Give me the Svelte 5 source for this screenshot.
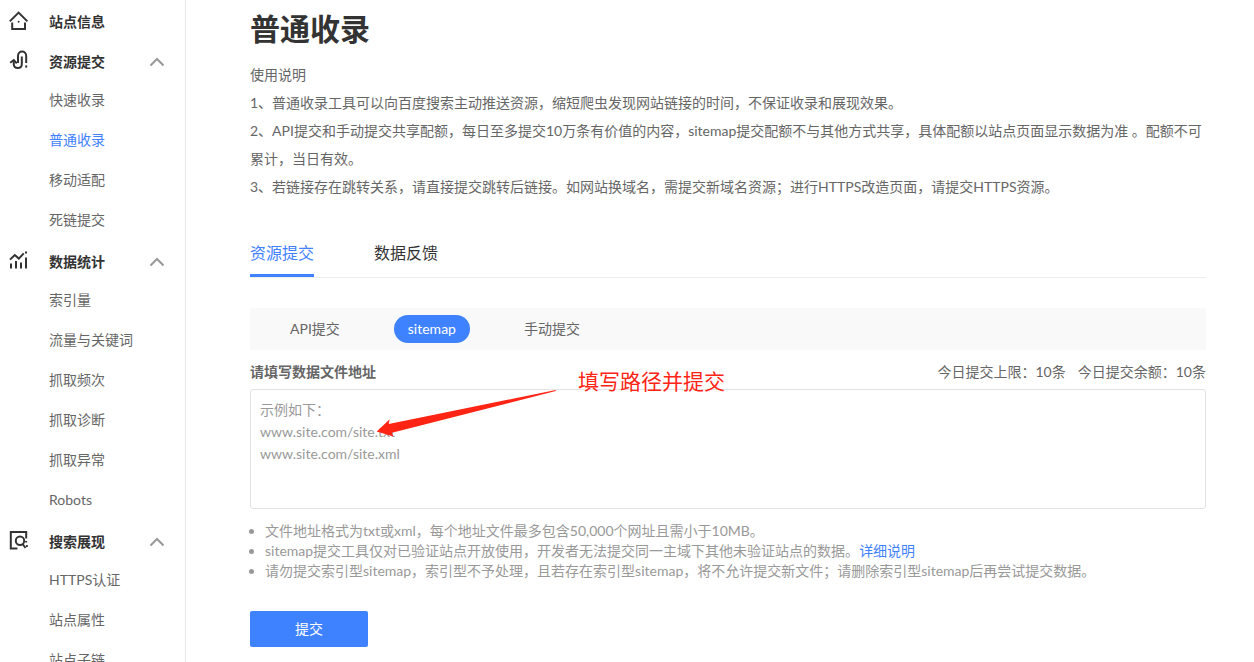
<script lang="ts">
  type Group = { name: string; icon: string; items: string[] };

  const groups: Group[] = [
    { name: '站点信息', icon: 'home', items: [] },
    { name: '资源提交', icon: 'link', items: ['快速收录', '普通收录', '移动适配', '死链提交'] },
    {
      name: '数据统计',
      icon: 'chart',
      items: ['索引量', '流量与关键词', '抓取频次', '抓取诊断', '抓取异常', 'Robots']
    },
    { name: '搜索展现', icon: 'search', items: ['HTTPS认证', '站点属性', '站点子链'] }
  ];

  const tabs = ['资源提交', '数据反馈'];
  const methods = ['API提交', 'sitemap', '手动提交'];

  let activeItem = $state('普通收录');
  let activeTab = $state('资源提交');
  let activeMethod = $state('sitemap');
  let closed = $state<string[]>([]);
  let urls = $state('');

  const placeholder = '示例如下：\nwww.site.com/site.txt\nwww.site.com/site.xml';

  function toggle(name: string) {
    closed = closed.includes(name) ? closed.filter((n) => n !== name) : [...closed, name];
  }
</script>

{#snippet groupIcon(icon: string)}
  <svg class="icon" viewBox="0 0 20 20" aria-hidden="true">
    {#if icon === 'home'}
      <path d="M.8 11.4 9.6 2.6l8.8 8.8" />
      <path d="M3.2 12.6V19H16v-6.4" />
      <circle class="dot" cx="9.6" cy="11.8" r="1" />
    {:else if icon === 'link'}
      <path d="M1.2 12.8 4.8 10 7.8 13.4" />
      <path d="M4.8 10.4v3.8c0 5 8 5 8 0V6.4" />
      <path d="M9 13V6c0-6 8.2-6 8.2 0v7" />
      <path d="M17.2 15.4v2.2" />
    {:else if icon === 'chart'}
      <path d="M1 9.6 5.8 5l4 3.6 5-5.2" />
      <path d="M2 13.4v5M7 11v7.4M12 12.4v6M17 7.4v11M17 1.4v2" />
    {:else}
      <path d="M8.4 18.6H1.8V2h15.4v6.4M1.8 2v16.6" />
      <circle cx="11" cy="10.8" r="4.2" />
      <path d="m13.6 14 3 4M17.2 11v1.6M17 16h1.8" />
    {/if}
  </svg>
{/snippet}

<div class="page">
  <nav class="sidebar">
    {#each groups as group}
      <button class="group" onclick={() => toggle(group.name)}>
        {@render groupIcon(group.icon)}
        <span class="group-name">{group.name}</span>
        {#if group.items.length}
          <svg class="chevron" viewBox="0 0 16 12" aria-hidden="true">
            <path d="M1.5 10.5 8 4l6.5 6.5" />
          </svg>
        {/if}
      </button>
      {#if !closed.includes(group.name)}
        {#each group.items as item}
          <a
            class="item"
            class:active={item === activeItem}
            href="#{item}"
            onclick={() => (activeItem = item)}>{item}</a
          >
        {/each}
      {/if}
    {/each}
  </nav>

  <main class="content">
    <h1>普通收录</h1>
    <div class="intro">
      <p>使用说明</p>
      <p>1、普通收录工具可以向百度搜索主动推送资源，缩短爬虫发现网站链接的时间，不保证收录和展现效果。</p>
      <p>
        2、API提交和手动提交共享配额，每日至多提交10万条有价值的内容，sitemap提交配额不与其他方式共享，具体配额以站点页面显示数据为准 。配额不可累计，当日有效。
      </p>
      <p>
        3、若链接存在跳转关系，请直接提交跳转后链接。如网站换域名，需提交新域名资源；进行HTTPS改造页面，请提交HTTPS资源。
      </p>
    </div>

    <div class="tabs">
      {#each tabs as tab}
        <button class="tab" class:active={tab === activeTab} onclick={() => (activeTab = tab)}>{tab}</button>
      {/each}
    </div>

    <div class="methods">
      {#each methods as method}
        <button class="method" class:active={method === activeMethod} onclick={() => (activeMethod = method)}
          >{method}</button
        >
      {/each}
    </div>

    <form onsubmit={(e) => e.preventDefault()}>
      <div class="form-head">
        <label for="urls">请填写数据文件地址</label>
        <div class="quota">
          <span>今日提交上限：10条</span>
          <span>今日提交余额：10条</span>
        </div>
      </div>
      <div class="field">
        <textarea id="urls" bind:value={urls} {placeholder}></textarea>
        <svg class="arrow" viewBox="0 0 190 60" aria-hidden="true">
          <path d="M6.7 51.5 19.7 39.3l-1 4.7L185.7 10v1L22 52.7l1.3 3.8Z" />
        </svg>
        <span class="note">填写路径并提交</span>
      </div>
      <ul class="tips">
        <li>文件地址格式为txt或xml，每个地址文件最多包含50,000个网址且需小于10MB。</li>
        <li>
          sitemap提交工具仅对已验证站点开放使用，开发者无法提交同一主域下其他未验证站点的数据。<a href="#detail"
            >详细说明</a
          >
        </li>
        <li>
          请勿提交索引型sitemap，索引型不予处理，且若存在索引型sitemap，将不允许提交新文件；请删除索引型sitemap后再尝试提交数据。
        </li>
      </ul>
      <button class="submit" type="submit">提交</button>
    </form>
  </main>
</div>

<style>
  :global(body) {
    background: #fff;
    color: #666;
    font-family: Lato, 'Noto Sans CJK SC', sans-serif;
    font-size: 14px;
  }

  button,
  textarea {
    font: inherit;
    color: inherit;
    border: 0;
    background: none;
    padding: 0;
    margin: 0;
  }

  button {
    cursor: pointer;
  }

  a {
    color: #3f82ff;
    text-decoration: none;
  }

  .page {
    display: flex;
    height: 100vh;
    overflow: hidden;
  }

  .sidebar {
    box-sizing: border-box;
    flex: 0 0 186px;
    border-right: 1px solid #e8e8e8;
    overflow: hidden;
  }

  .group {
    display: flex;
    align-items: center;
    width: 100%;
    height: 40px;
    padding: 2px 20px 0 9px;
    color: #333;
    font-weight: 700;
    text-align: left;
  }

  .group-name {
    flex: 1;
    padding-left: 20px;
  }

  .icon {
    width: 20px;
    height: 20px;
    margin-bottom: 2px;
  }

  .icon path,
  .icon circle {
    fill: none;
    stroke: #333;
    stroke-width: 2;
  }

  .icon .dot {
    fill: #333;
    stroke: none;
  }

  .chevron {
    width: 16px;
    height: 12px;
  }

  .chevron path {
    fill: none;
    stroke: #999;
    stroke-width: 2;
  }

  .item {
    display: block;
    padding-left: 49px;
    color: #666;
    line-height: 40px;
  }

  .item.active {
    color: #3f82ff;
  }

  .content {
    flex: 1;
    min-width: 0;
    padding: 8px 48px 0 64px;
  }

  h1 {
    margin: 0 0 12px;
    color: #333;
    font-size: 30px;
    line-height: 41px;
  }

  .intro p {
    margin: 0;
    line-height: 28px;
  }

  .tabs {
    display: flex;
    gap: 60px;
    margin-top: 30px;
    border-bottom: 1px solid #eee;
  }

  .tab {
    border-bottom: 3px solid transparent;
    color: #333;
    font-size: 16px;
    line-height: 43px;
  }

  .tab.active {
    border-bottom-color: #3f82ff;
    color: #3f82ff;
  }

  .methods {
    display: flex;
    gap: 40px;
    margin-top: 30px;
    padding: 7px 26px;
    background: #f9f9f9;
  }

  .method {
    padding: 0 14px;
    border-radius: 14px;
    line-height: 28px;
  }

  .method.active {
    background: #3f82ff;
    color: #fff;
  }

  .form-head {
    display: flex;
    justify-content: space-between;
    padding: 12px 0 7px;
    line-height: 20px;
  }

  label {
    font-weight: 700;
  }

  .quota {
    display: flex;
    gap: 12px;
  }

  .field {
    position: relative;
  }

  textarea {
    display: block;
    box-sizing: border-box;
    width: 100%;
    height: 120px;
    padding: 9px;
    border: 1px solid #e3e3e3;
    border-radius: 3px;
    line-height: 22px;
    resize: none;
  }

  textarea::placeholder {
    color: #999;
    opacity: 1;
  }

  /* hand-drawn hint laid over the text box */
  .arrow {
    position: absolute;
    top: -9px;
    left: 120px;
    width: 190px;
    height: 60px;
    pointer-events: none;
  }

  .arrow path {
    fill: #ff2414;
  }

  .note {
    position: absolute;
    top: -24px;
    left: 328px;
    color: #ff2414;
    font-size: 21px;
    line-height: 32px;
    pointer-events: none;
  }

  .tips {
    margin: 12px 0 30px;
    padding: 0;
    color: #999;
    line-height: 20px;
    list-style: none;
  }

  .tips li {
    display: flex;
    align-items: center;
  }

  .tips li::before {
    content: '';
    width: 5px;
    height: 5px;
    margin: 0 11px 0 -1px;
    border-radius: 50%;
    background: #999;
  }

  .submit {
    width: 118px;
    border-radius: 2px;
    background: #3f82ff;
    color: #fff;
    line-height: 36px;
  }
</style>
